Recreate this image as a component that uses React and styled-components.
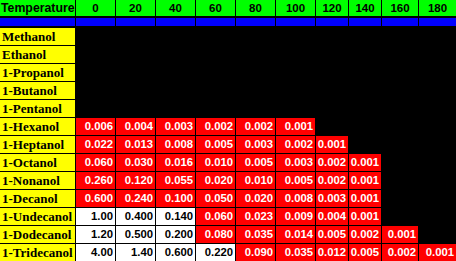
import React from 'react'
import styled, { createGlobalStyle } from 'styled-components'

const temps = [0, 20, 40, 60, 80, 100, 120, 140, 160, 180]

// each row: name, white (saturated) values, red values
const rows = [
  { name: 'Methanol', white: [], red: [] },
  { name: 'Ethanol', white: [], red: [] },
  { name: '1-Propanol', white: [], red: [] },
  { name: '1-Butanol', white: [], red: [] },
  { name: '1-Pentanol', white: [], red: [] },
  { name: '1-Hexanol', white: [], red: ['0.006', '0.004', '0.003', '0.002', '0.002', '0.001'] },
  { name: '1-Heptanol', white: [], red: ['0.022', '0.013', '0.008', '0.005', '0.003', '0.002', '0.001'] },
  { name: '1-Octanol', white: [], red: ['0.060', '0.030', '0.016', '0.010', '0.005', '0.003', '0.002', '0.001'] },
  { name: '1-Nonanol', white: [], red: ['0.260', '0.120', '0.055', '0.020', '0.010', '0.005', '0.002', '0.001'] },
  { name: '1-Decanol', white: [], red: ['0.600', '0.240', '0.100', '0.050', '0.020', '0.008', '0.003', '0.001'] },
  { name: '1-Undecanol', white: ['1.00', '0.400', '0.140'], red: ['0.060', '0.023', '0.009', '0.004', '0.001'] },
  { name: '1-Dodecanol', white: ['1.20', '0.500', '0.200'], red: ['0.080', '0.035', '0.014', '0.005', '0.002', '0.001'] },
  { name: '1-Tridecanol', white: ['4.00', '1.40', '0.600', '0.220'], red: ['0.090', '0.035', '0.012', '0.005', '0.002', '0.001'] }
]

export default function App () {
  return (
    <>
      <GlobalStyle />
      <Table>
        <Row>
          <HeadCell $left>Temperature</HeadCell>
          {temps.map(t => <HeadCell key={t}>{t}</HeadCell>)}
        </Row>
        <BlueRow>
          <BlueCell />
          {temps.map(t => <BlueCell key={t} />)}
        </BlueRow>
        {rows.map(r => (
          <Row key={r.name}>
            <Label>{r.name}</Label>
            {r.white.map((v, i) => <Value key={'w' + i} $tone="white">{v}</Value>)}
            {r.red.map((v, i) => <Value key={'r' + i} $tone="red">{v}</Value>)}
          </Row>
        ))}
      </Table>
    </>
  )
}

const GlobalStyle = createGlobalStyle`
  body {
    margin: 0;
    background: #000;
  }
`

const Table = styled.div`
  display: flex;
  flex-direction: column;
  gap: 1px;
  width: 456px;
`

const Row = styled.div`
  display: grid;
  grid-template-columns: 75px repeat(6, 39px) 32px 32px 36px 37px;
  grid-auto-rows: 17px;
  column-gap: 1px;
`

const BlueRow = styled(Row)`
  grid-auto-rows: 8px;
  margin-bottom: 1px;
`

const HeadCell = styled.div`
  background: #00ff00;
  height: 16px;
  font-family: 'Liberation Sans', Arial, sans-serif;
  font-weight: bold;
  font-size: ${p => (p.$left ? '12.3px' : '11.5px')};
  line-height: 16px;
  color: #000;
  text-align: ${p => (p.$left ? 'left' : 'center')};
  padding-left: ${p => (p.$left ? '1px' : '0')};
  white-space: nowrap;
  overflow: hidden;
`

const BlueCell = styled.div`
  background: #0000ff;
`

const Label = styled.div`
  background: #ffff00;
  font-family: 'Liberation Serif', 'Times New Roman', serif;
  font-weight: bold;
  font-size: 13px;
  line-height: 18px;
  padding-left: 2px;
  color: #000;
  white-space: nowrap;
  overflow: hidden;
`

const Value = styled.div`
  background: ${p => (p.$tone === 'red' ? '#ff0000' : '#ffffff')};
  color: ${p => (p.$tone === 'red' ? '#ffffff' : '#000000')};
  font-family: 'Liberation Sans', Arial, sans-serif;
  font-weight: bold;
  font-size: 11.3px;
  line-height: 17px;
  text-align: right;
  padding-right: 2px;
  white-space: nowrap;
`
